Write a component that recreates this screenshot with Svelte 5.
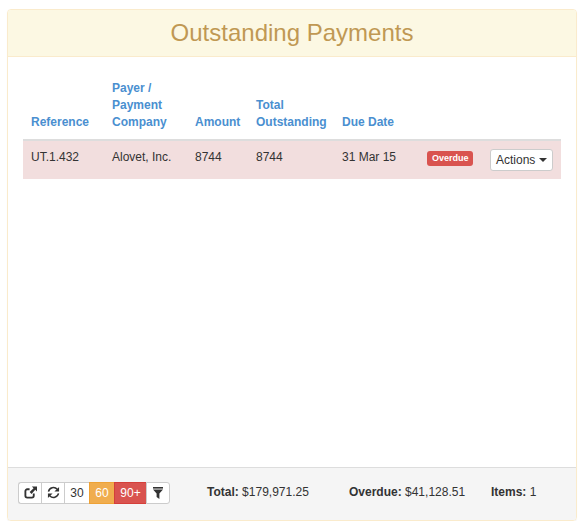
<script>
  const columns = [
    { label: "Reference", width: 81 },
    { label: "Payer / Payment Company", width: 83 },
    { label: "Amount", width: 61 },
    { label: "Total Outstanding", width: 86 },
    { label: "Due Date", width: 85 },
    { label: "", width: 63 },
    { label: "", width: 79 },
  ];

  const payments = [
    { reference: "UT.1.432", payer: "Alovet, Inc.", amount: 8744, outstanding: 8744, due: "31 Mar 15" },
  ];
</script>

<div class="panel">
  <div class="panel-heading">
    <h1>Outstanding Payments</h1>
  </div>

  <div class="panel-body">
    <table>
      <colgroup>
        {#each columns as col}
          <col style="width: {col.width}px" />
        {/each}
      </colgroup>
      <thead>
        <tr>
          {#each columns as col}
            <th>{col.label}</th>
          {/each}
        </tr>
      </thead>
      <tbody>
        {#each payments as p}
          <tr class="danger">
            <td>{p.reference}</td>
            <td>{p.payer}</td>
            <td>{p.amount}</td>
            <td>{p.outstanding}</td>
            <td>{p.due}</td>
            <td><span class="label">Overdue</span></td>
            <td>
              <button class="actions">Actions<span class="caret"></span></button>
            </td>
          </tr>
        {/each}
      </tbody>
    </table>
  </div>

  <div class="panel-footer">
    <div class="btn-group">
      <button class="icon" aria-label="Export">
        <svg width="13" height="13" viewBox="0 0 14 14">
          <path d="M10.5 8v2.5a2 2 0 0 1-2 2h-5a2 2 0 0 1-2-2v-5a2 2 0 0 1 2-2H6" fill="none" stroke="#333" stroke-width="2" />
          <path d="M8.5 0.5H14V6l-1.9-1.9-4 4.4-2-2 4.2-4.2z" fill="#333" />
        </svg>
      </button>
      <button class="icon" aria-label="Refresh">
        <svg width="13" height="13" viewBox="0 0 14 14">
          <path d="M1.6 6a5.4 5.4 0 0 1 9.4-2.4" fill="none" stroke="#333" stroke-width="1.6" />
          <path d="M13 1V6H8z" fill="#333" />
          <path d="M12.4 8a5.4 5.4 0 0 1-9.4 2.4" fill="none" stroke="#333" stroke-width="1.6" />
          <path d="M1 13V8h5z" fill="#333" />
        </svg>
      </button>
      <button class="num">30</button>
      <button class="num warn">60</button>
      <button class="num over">90+</button>
      <button class="icon last" aria-label="Filter">
        <svg width="10" height="12" viewBox="0 0 10 12">
          <rect x="0" y="0" width="10" height="1.6" fill="#333" />
          <path d="M0 2.6h10L6.4 6.6V12L3.6 10V6.6z" fill="#333" />
        </svg>
      </button>
    </div>

    <div class="totals">
      <span class="total"><b>Total:</b> $179,971.25</span>
      <span class="overdue"><b>Overdue:</b> $41,128.51</span>
      <span class="items"><b>Items:</b> 1</span>
    </div>
  </div>
</div>

<style>
  :global(body) {
    background: #fff;
    font-family: "Liberation Sans", Arial, sans-serif;
    font-size: 12px;
    color: #333;
  }

  .panel {
    box-sizing: border-box;
    display: flex;
    flex-direction: column;
    width: 570px;
    height: 512px;
    margin: 9px 0 0 7px;
    border: 1px solid #faebcc;
    border-radius: 4px;
    box-shadow: 0 1px 1px rgba(0, 0, 0, 0.05);
  }

  .panel-heading {
    height: 47px;
    background: #fcf8e3;
    border-bottom: 1px solid #faebcc;
    border-radius: 3px 3px 0 0;
    box-sizing: border-box;
  }

  h1 {
    margin: 0;
    font-size: 24px;
    font-weight: 400;
    line-height: 46px;
    text-align: center;
    color: #c09853;
  }

  .panel-body {
    flex: 1;
    padding: 15px;
  }

  table {
    table-layout: fixed;
    width: 538px;
    border-collapse: collapse;
    border-spacing: 0;
    line-height: 17px;
  }

  th {
    padding: 8px;
    text-align: left;
    vertical-align: bottom;
    font-weight: 700;
    color: #4a8fd0;
    border-bottom: 2px solid #ddd;
  }

  td {
    padding: 8px;
    vertical-align: top;
    height: 22px;
    box-sizing: content-box;
  }

  tr.danger td {
    background: #f2dede;
  }

  .label {
    display: inline-block;
    padding: 2px 4px 3px 5px;
    margin-top: 2px;
    background: #d9534f;
    color: #fff;
    font-size: 9px;
    font-weight: 700;
    line-height: 10px;
    border-radius: 3px;
    vertical-align: top;
  }

  .actions {
    display: block;
    width: 63px;
    height: 22px;
    padding: 0 0 0 5px;
    text-align: left;
    background: #fff;
    border: 1px solid #ccc;
    border-radius: 3px;
    font: inherit;
    color: #333;
    white-space: nowrap;
  }

  .caret {
    display: inline-block;
    width: 0;
    height: 0;
    margin-left: 4px;
    vertical-align: middle;
    border-top: 4px solid #333;
    border-left: 4px solid transparent;
    border-right: 4px solid transparent;
  }

  .panel-footer {
    display: flex;
    align-items: center;
    box-sizing: border-box;
    height: 53px;
    padding: 0 10px 3px;
    background: #f5f5f5;
    border-top: 1px solid #ddd;
    border-radius: 0 0 3px 3px;
  }

  .btn-group {
    display: flex;
    height: 22px;
  }

  .btn-group button {
    box-sizing: border-box;
    display: flex;
    align-items: center;
    justify-content: center;
    height: 22px;
    padding: 0;
    margin: 0;
    background: #fff;
    border: 1px solid #ccc;
    border-right-width: 0;
    font: inherit;
    color: #333;
  }

  .btn-group .icon {
    width: 23px;
  }

  .btn-group .icon:first-child {
    border-radius: 3px 0 0 3px;
  }

  .btn-group .icon.last {
    width: 24px;
    border-right-width: 1px;
    border-radius: 0 3px 3px 0;
  }

  .btn-group .num {
    width: 25px;
  }

  .btn-group .warn {
    background: #f0ad4e;
    border-color: #eea236;
    color: #fff;
  }

  .btn-group .over {
    width: 32px;
    background: #d9534f;
    border-color: #d43f3a;
    color: #fff;
  }

  .totals {
    position: relative;
    flex: 1;
    height: 17px;
    line-height: 17px;
  }

  .totals span {
    position: absolute;
    top: 0;
    white-space: nowrap;
  }

  .total { left: 37px; }
  .overdue { left: 179px; }
  .items { left: 321px; }
</style>
